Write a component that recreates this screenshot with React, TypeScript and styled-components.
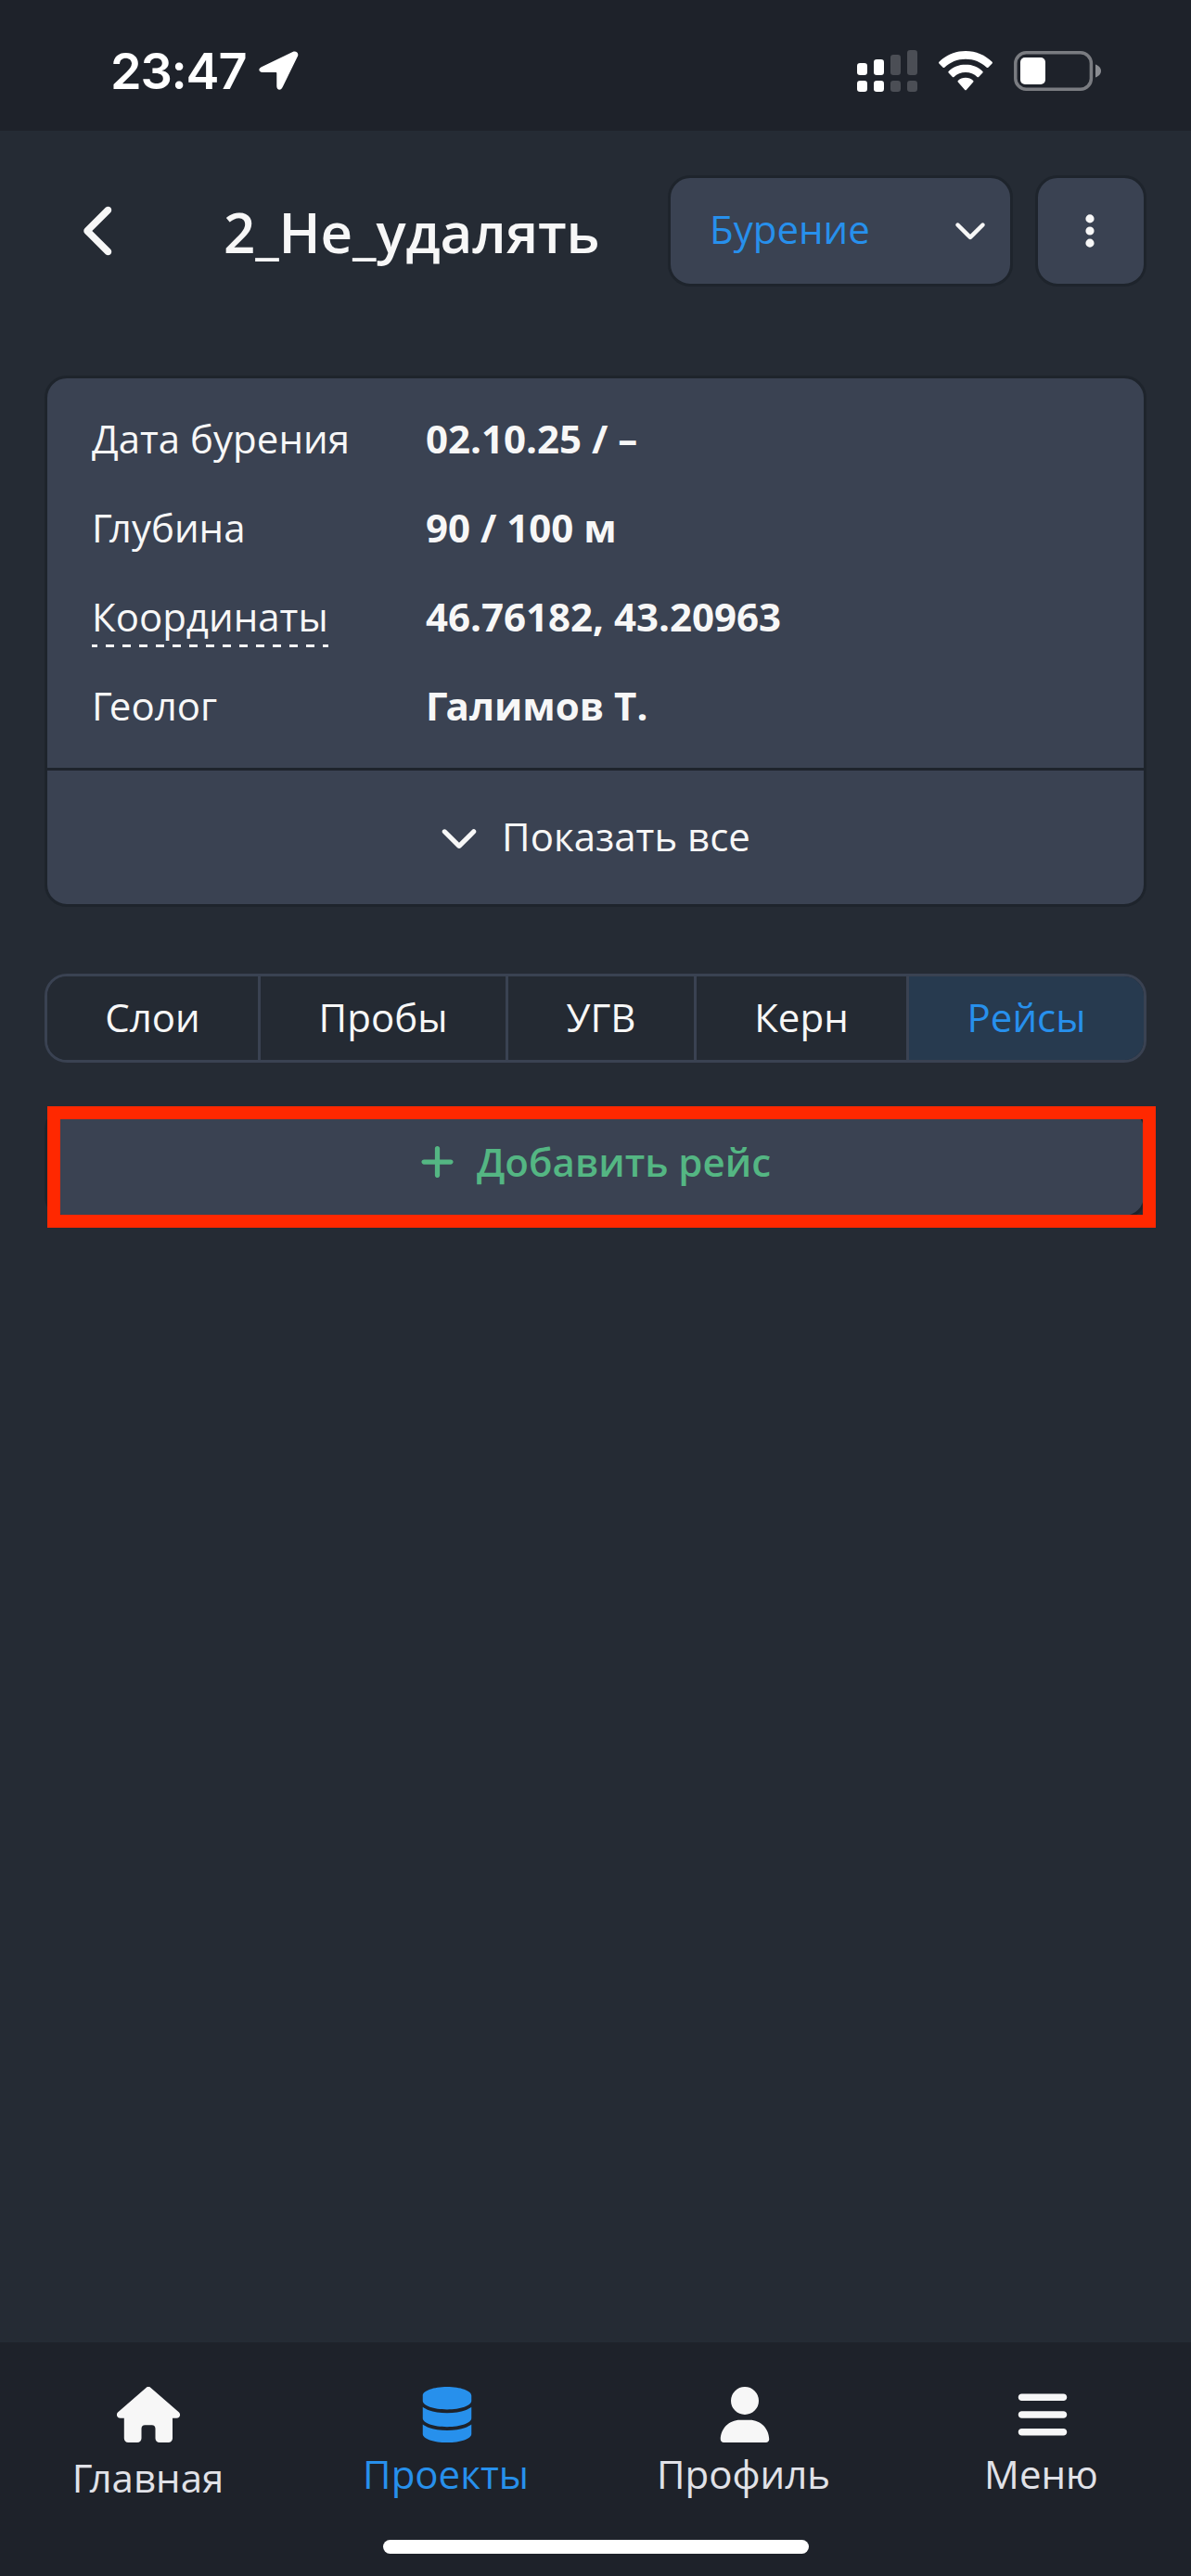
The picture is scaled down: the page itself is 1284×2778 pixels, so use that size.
import type { ReactNode } from "react";
import styled, { createGlobalStyle } from "styled-components";
import {
  FaBars,
  FaChevronDown,
  FaChevronLeft,
  FaDatabase,
  FaEllipsisVertical,
  FaPlus,
  FaUser,
} from "react-icons/fa6";

type Detail = { label: string; value: string; hint?: boolean };

const details: Detail[] = [
  { label: "Дата бурения", value: "02.10.25 / –" },
  { label: "Глубина", value: "90 / 100 м" },
  { label: "Координаты", value: "46.76182, 43.20963", hint: true },
  { label: "Геолог", value: "Галимов Т." },
];

const tabs = [
  { title: "Слои", width: 227 },
  { title: "Пробы", width: 264 },
  { title: "УГВ", width: 200 },
  { title: "Керн", width: 226 },
  { title: "Рейсы", width: 253 },
];

type NavEntry = { title: string; icon: ReactNode; offset?: number };

const navigation: NavEntry[] = [
  { title: "Главная", icon: <House />, offset: 4 },
  { title: "Проекты", icon: <FaDatabase size={60} /> },
  { title: "Профиль", icon: <FaUser size={60} /> },
  { title: "Меню", icon: <FaBars size={60} /> },
];

// "Г" leaves a visible hole before the next letter, so it is pulled in
const kernFirst = (text: string, amount: number) => (text.startsWith("Г") ? amount : 0);

function House() {
  return (
    <svg width="70" height="60" viewBox="0 0 70 60" fill="currentColor">
      <path d="M31.500.9a3.600 3.600 0 0 1 5 0L67 27.600c2.200 2.300 1 6.200-2.800 6.200H60v21.700c0 2.600-1.900 4.500-4.500 4.500h-9.500c-2.600 0-4.500-1.900-4.500-4.500V45c0-2.300-1.400-3.800-3.700-3.800h-7.600c-2.300 0-3.700 1.500-3.700 3.800v10.500c0 2.600-1.900 4.500-4.500 4.500H12.300c-2.600 0-4.500-1.900-4.500-4.500V33.800H3.800C0 33.800-1.200 29.900 1 27.600Z" />
    </svg>
  );
}

function LocationArrow() {
  return (
    <svg width="43" height="42" viewBox="0 0 43 42" fill="#fff">
      <path d="M36.500 1 2.800 17.200C-1 19.100-.2 23 4 23h14.500c.5 0 .8.300.8.800V38c0 4.300 4.400 5.100 6.200 1.200L42 5.500C43.400 2 40-.6 36.500 1Z" />
    </svg>
  );
}

function Signal() {
  const bars = [67, 63, 58, 53];
  return (
    <svg width="65" height="45" viewBox="0 53 65 45">
      {bars.map((top, i) => (
        <g key={top} fill={i < 2 ? "#fff" : "#4b4e55"}>
          <rect x={i * 18} y={top} width="11" height={80 - top} rx="3.2" />
          <rect x={i * 18} y="86" width="11" height="12" rx="3.2" />
        </g>
      ))}
    </svg>
  );
}

function Wifi() {
  return (
    <svg width="58" height="43" viewBox="0 0 58 43" fill="#fff">
      <path d="M29 0C17.800 0 7.500 4.500.4 11.800c-.5.500-.5 1.100 0 1.600l4.200 4.300c.5.500 1.200.5 1.700 0C12.200 12 20.200 8.700 29 8.700S45.800 12 51.700 17.700c.5.500 1.200.5 1.700 0l4.200-4.300c.5-.5.5-1.100 0-1.600C50.500 4.500 40.200 0 29 0Z" />
      <path d="M29 14.500c-7.100 0-13.600 2.800-18.400 7.400-.5.500-.5 1.100 0 1.600l4.300 4.400c.5.500 1.100.5 1.600 0 3.300-3 7.700-4.800 12.500-4.800s9.200 1.800 12.500 4.800c.5.500 1.100.5 1.600 0l4.300-4.400c.5-.5.500-1.100 0-1.600-4.800-4.600-11.300-7.400-18.400-7.400Z" />
      <path d="M29 28.800c-3.100 0-6 1.200-8.200 3.100-.5.500-.5 1.100 0 1.600l7.200 8.200c.6.700 1.400.7 2 0l7.200-8.200c.5-.5.500-1.100 0-1.600-2.200-1.900-5.100-3.100-8.200-3.100Z" />
    </svg>
  );
}

function Battery() {
  return (
    <svg width="94" height="43" viewBox="0 0 94 43">
      <rect x="1.800" y="1.800" width="81.600" height="39.400" rx="11.500" fill="none" stroke="#7a7c81" strokeWidth="3.500" />
      <rect x="7" y="7" width="27" height="29" rx="5" fill="#fff" />
      <path d="M88 14.500c3.600 1.200 6 3.800 6 7s-2.400 5.800-6 7Z" fill="#8a8c91" />
    </svg>
  );
}

export default function App() {
  return (
    <>
      <GlobalStyle />
      <Screen>
        <StatusBar>
          <Time>23:47</Time>
          <LocationArrow />
          <StatusIcons>
            <Signal />
            <Wifi />
            <Battery />
          </StatusIcons>
        </StatusBar>

        <Header>
          <BackButton aria-label="Назад">
            <FaChevronLeft size={60} />
          </BackButton>
          <Title>2_Не_удалять</Title>
          <StageSelect>
            Бурение
            <FaChevronDown size={36} />
          </StageSelect>
          <MoreButton aria-label="Ещё">
            <FaEllipsisVertical size={42} />
          </MoreButton>
        </Header>

        <Card>
          <Details>
            {details.map(({ label, value, hint }) => (
              <DetailRow key={label}>
                <DetailLabel>
                  <LabelText $hint={hint} $kern={kernFirst(label, -3)}>
                    {label}
                  </LabelText>
                </DetailLabel>
                <DetailValue $kern={kernFirst(value, -2)}>{value}</DetailValue>
              </DetailRow>
            ))}
          </Details>
          <ShowAll>
            <FaChevronDown size={42} />
            Показать все
          </ShowAll>
        </Card>

        <Tabs>
          {tabs.map(({ title, width }) => (
            <Tab key={title} $width={width} $active={title === "Рейсы"}>
              {title}
            </Tab>
          ))}
        </Tabs>

        <AddArea>
          <AddButton>
            <PlusIcon />
            Добавить рейс
          </AddButton>
          <Highlight />
        </AddArea>

        <BottomBar>
          <Navigation>
            {navigation.map(({ title, icon, offset = 0 }) => (
              <NavItem key={title} $active={title === "Проекты"}>
                {icon}
                <NavTitle $offset={offset} $kern={kernFirst(title, -3)}>
                  {title}
                </NavTitle>
              </NavItem>
            ))}
          </Navigation>
          <HomeIndicator />
        </BottomBar>
      </Screen>
    </>
  );
}

const GlobalStyle = createGlobalStyle`
  * {
    box-sizing: border-box;
  }

  body {
    margin: 0;
    background-color: #252b34;
  }

  button {
    margin: 0;
    padding: 0;
    border: none;
    background: none;
    color: inherit;
    font: inherit;
  }

  svg {
    display: block;
    flex-shrink: 0;
  }
`;

const Screen = styled.div`
  display: flex;
  flex-direction: column;
  width: 1284px;
  height: 2778px;
  background-color: #252b34;
  color: #f7f7f7;
  font-family: "Open Sans", "Noto Sans", sans-serif;
  font-size: 42px;
  line-height: 60px;
  overflow: hidden;
`;

const StatusBar = styled.div`
  display: flex;
  align-items: center;
  height: 141px;
  padding: 11px 97px 0 119px;
  background-color: #1e222a;
`;

const Time = styled.span`
  width: 160px;
  padding-top: 2px;
  color: #fff;
  font-family: Inter, sans-serif;
  font-size: 54px;
  font-weight: 600;
  letter-spacing: -1.2px;
`;

const StatusIcons = styled.div`
  display: flex;
  align-items: center;
  gap: 23px;
  margin-left: auto;
`;

const Header = styled.header`
  display: flex;
  align-items: center;
  height: 120px;
  margin-top: 48px;
  padding: 0 48px 0 79px;
`;

const BackButton = styled.button`
  width: 162px;
`;

const Title = styled.h1`
  flex: 1;
  margin: 0;
  padding-top: 2px;
  font-size: 60px;
  font-weight: 600;
  line-height: 82px;
  letter-spacing: -0.1px;
  white-space: nowrap;
`;

const StageSelect = styled.button`
  display: flex;
  align-items: center;
  justify-content: space-between;
  width: 372px;
  height: 120px;
  padding: 0 25px 4px 42px;
  border: 3px solid #1e242c;
  border-radius: 24px;
  background-color: #3a4252;
  color: #2790ec;

  svg {
    color: #f7f7f7;
  }
`;

const MoreButton = styled.button`
  display: flex;
  align-items: center;
  justify-content: center;
  width: 120px;
  height: 120px;
  margin-left: 24px;
  padding-right: 2px;
  border: 3px solid #1e242c;
  border-radius: 24px;
  background-color: #3a4252;
`;

const Card = styled.section`
  margin: 96px 48px 0;
  border: 3px solid #1e242c;
  border-radius: 24px;
  background-color: #3a4252;
`;

const Details = styled.div`
  height: 423px;
  padding: 17px 48px 0;
  border-bottom: 3px solid #1e242c;
`;

const DetailRow = styled.div`
  display: flex;
  align-items: center;
  height: 96px;
`;

const DetailLabel = styled.div`
  width: 360px;
`;

const LabelText = styled.span<{ $hint?: boolean; $kern: number }>`
  display: inline-block;
  height: 66px;
  padding-top: 3px;
  ${({ $hint }) =>
    $hint &&
    `
    background: repeating-linear-gradient(90deg, #f7f7f7 0 6px, transparent 6px 15px, #f7f7f7 15px 18px)
      left bottom / 100% 3px no-repeat;
  `}

  &::first-letter {
    letter-spacing: ${({ $kern }) => $kern}px;
  }
`;

const DetailValue = styled.span<{ $kern: number }>`
  font-weight: 700;

  &::first-letter {
    letter-spacing: ${({ $kern }) => $kern}px;
  }
`;

const ShowAll = styled.button`
  display: flex;
  align-items: center;
  justify-content: center;
  gap: 25px;
  width: 100%;
  height: 144px;
  padding: 0 1px 2px 0;
`;

const Tabs = styled.div`
  display: flex;
  height: 96px;
  margin: 72px 48px 0;
  border: 3px solid #3a4252;
  border-radius: 24px;
  overflow: hidden;
`;

const Tab = styled.button<{ $width: number; $active: boolean }>`
  box-sizing: content-box;
  width: ${({ $width }) => $width}px;
  height: 88px;
  padding-bottom: 2px;
  background-color: ${({ $active }) => ($active ? "#273a4f" : "#242a33")};
  color: ${({ $active }) => ($active ? "#2790ec" : "#f7f7f7")};

  & + & {
    border-left: 3px solid #3a4252;
  }
`;

const AddArea = styled.div`
  position: relative;
  margin: 48px 48px 0;
`;

const AddButton = styled.button`
  display: flex;
  align-items: center;
  justify-content: center;
  gap: 24px;
  width: 100%;
  height: 120px;
  padding-bottom: 2px;
  border: 3px solid #1e242c;
  border-radius: 24px;
  background-color: #3a4252;
  color: #54b683;
  font-weight: 600;
`;

const PlusIcon = styled(FaPlus)`
  width: 37px;
  height: 42px;
`;

const Highlight = styled.div`
  position: absolute;
  top: -1px;
  right: -10px;
  bottom: -10px;
  left: 3px;
  border: 14px solid #ff2800;
`;

const BottomBar = styled.footer`
  display: flex;
  flex-direction: column;
  align-items: center;
  height: 252px;
  margin-top: auto;
  padding-top: 48px;
  background-color: #1e222a;
`;

const Navigation = styled.nav`
  display: grid;
  grid-template-columns: repeat(4, 321px);
  height: 165px;
`;

const NavItem = styled.button<{ $active: boolean }>`
  display: flex;
  flex-direction: column;
  align-items: center;
  color: ${({ $active }) => ($active ? "#2790ec" : "#f7f7f7")};

  span {
    color: ${({ $active }) => ($active ? "#2790ec" : "#e1e2e8")};
  }
`;

const NavTitle = styled.span<{ $offset: number; $kern: number }>`
  margin-top: ${({ $offset }) => 4 + $offset}px;
  padding-right: 2px;

  &::first-letter {
    letter-spacing: ${({ $kern }) => $kern}px;
  }
`;

const HomeIndicator = styled.div`
  width: 459px;
  height: 15px;
  border-radius: 8px;
  background-color: #fff;
`;
